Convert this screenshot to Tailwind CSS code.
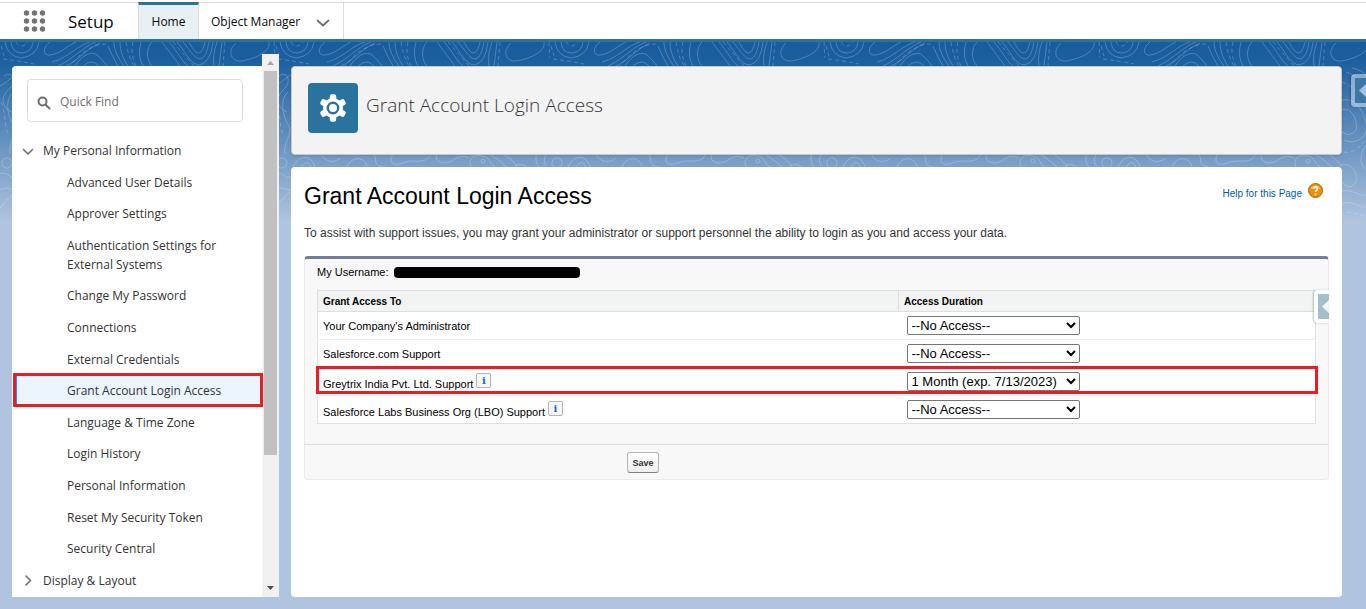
<!DOCTYPE html>
<html lang="en">
<head>
    <meta charset="UTF-8">
    <meta name="viewport" content="width=device-width, initial-scale=1.0">
    <title>Grant Account Login Access</title>
    <!-- Tailwind CSS CDN -->
    <script src="https://cdn.jsdelivr.net/npm/@tailwindcss/browser@4"></script>
</head>
<body class="relative flex h-screen flex-col overflow-hidden bg-[#b0c4df] font-['Open_Sans','Noto_Sans',sans-serif] text-xs text-[#333333]">

    <!-- Top navigation -->
    <header class="flex h-[42px] shrink-0 border-b-3 border-[#2a739e] bg-white">
        <div class="mt-[2px] flex flex-1 border-t border-[#dddbda]">
            <button type="button" aria-label="App Launcher" class="ml-[23px] w-[24px] pt-[2px]">
                <svg class="h-[24px] w-[24px]" viewBox="0 0 24 24" fill="#747474">
                    <circle cx="3.500" cy="3" r="2.700"/><circle cx="11.500" cy="3" r="2.700"/><circle cx="19.500" cy="3" r="2.700"/>
                    <circle cx="3.500" cy="11" r="2.700"/><circle cx="11.500" cy="11" r="2.700"/><circle cx="19.500" cy="11" r="2.700"/>
                    <circle cx="3.500" cy="19" r="2.700"/><circle cx="11.500" cy="19" r="2.700"/><circle cx="19.500" cy="19" r="2.700"/>
                </svg>
            </button>
            <div class="flex w-[91px] items-center pt-[2px] pl-[21px] text-[17px] text-[#080707]">Setup</div>
            <nav class="flex text-[#080707]">
                <a href="#" class="-mt-px flex w-[61px] items-center justify-center border-x border-t-3 border-x-[#dddbda] border-t-[#2a739e] bg-[#e9f0f3]">Home</a>
                <a href="#" class="flex w-[145px] items-center justify-between border-r border-[#dddbda] pt-[2px] pr-[13px] pl-3">
                    Object Manager
                    <svg class="h-[14px] w-[14px]" viewBox="0 0 14 14" fill="none" stroke="#706e6b" stroke-width="1.700" stroke-linecap="round" stroke-linejoin="round"><path d="M1.500 5.500L7 10.500l5.500-5"/></svg>
                </a>
            </nav>
        </div>
    </header>

    <!-- Topographic backdrop -->
    <svg class="absolute top-[42px] left-0 h-[180px] w-full" aria-hidden="true">
        <defs>
            <linearGradient id="sky" x1="0" y1="0" x2="0" y2="1">
                <stop offset="0" stop-color="#195c9c"/>
                <stop offset=".1" stop-color="#1c5f9f"/>
                <stop offset="1" stop-color="#b0c4df"/>
            </linearGradient>
            <pattern id="topo" width="275" height="180" patternUnits="userSpaceOnUse">
                <g fill="none" stroke="#ffffff" stroke-opacity=".22" stroke-width="1">
                    <path d="M5 0Q7 14 21 16Q37 14 39 0M11 0Q12 11 22 11Q32 10 33 0"/>
                    <path d="M50 0C42 6 43 14 50 13C60 12 67 4 76 0M90 0C76 4 68 16 52 20M96 0C84 4 72 18 58 24M100 1C88 6 76 20 66 24M75 24C84 10 94 10 97 13Q103 18 107 24M83 24Q92 16 99 24"/>
                    <path d="M114 0C114 8 118 16 124 24M120 0C120 10 124 18 128 24M108 4Q112 14 118 24M141 0Q137 14 143 24M152 0C146 6 146 18 152 24"/>
                    <path d="M162 0L180 24M169 0C178 10 182 20 188 24M177 0C186 10 190 23 200 23Q211 20 213 0M183 0C190 8 194 17 201 17Q207 14 209 0M189 0Q200 22 205 0M217 0Q212 14 214 24M222 0L219 24"/>
                    <path d="M236 1C226 10 232 20 241 19C254 17 271 10 269 0"/>
                    <path stroke-dasharray="4 3" d="M16 0Q21 8 28 0M3 17Q20 19 34 22M106 2C90 2 78 14 70 24M126 0Q128 14 134 24M133 0Q130 12 136 24M173 0L194 24M225 0L223 24M274 0L275 16M1 4L4 14"/>
                    <path d="M4 34C12 28 18 40 8 48C0 56 2 66 12 70M0 44C8 40 12 34 18 32M13 50C4 58 8 76 14 84C18 92 8 100 10 112M7 116a5 5 0 1 1-.1 0M0 132C8 128 12 140 16 134M0 148C10 142 12 152 20 146M0 166L14 150"/>
                    <path d="M252 26C264 28 272 38 275 44M246 30C260 34 262 46 275 56M238 60C252 52 262 66 266 80C270 94 256 104 244 98M240 68C252 64 258 78 256 88Q250 96 242 90M275 96C266 100 258 112 262 122C266 132 275 130 275 130M275 108Q266 116 271 124M240 124C252 118 258 132 256 140C250 150 242 142 240 136M238 150C254 144 262 160 275 150M242 162C256 156 262 172 275 162"/>
                    <path stroke-dasharray="4 3" d="M242 40C254 44 258 54 275 66M1 60C6 70 4 84 8 92M244 110C254 112 262 104 275 88M240 172C256 166 262 178 275 174"/>
                    <path d="M18 125C24 112 36 112 40 125M26 125Q32 116 36 125M46 112C50 120 58 122 66 116M72 125C76 114 90 114 92 125M98 112C104 118 96 122 108 125M118 112C112 122 120 124 128 121C138 116 150 124 156 112M162 112C158 120 170 124 178 118Q186 112 194 116M196 125C192 116 200 112 208 114C216 116 214 122 220 125M214 112C222 116 226 120 232 125M228 112Q236 116 242 124"/>
                    <circle cx="208" cy="119" r="2"/>
                </g>
            </pattern>
        </defs>
        <rect width="100%" height="180" fill="url(#sky)"/>
        <rect width="100%" height="180" fill="url(#topo)"/>
    </svg>

    <div class="relative flex min-h-0 flex-1 pr-6 pb-3 pl-3">

        <!-- Setup tree -->
        <aside class="mt-6 flex w-[250px] shrink-0 flex-col rounded-tl bg-white pb-px">
            <div class="relative mt-[13px] mr-[19px] ml-[15px]">
                <svg class="absolute top-[17px] left-[10px] h-[14px] w-[14px]" viewBox="0 0 14 14" fill="none" stroke="#706e6b" stroke-width="2" stroke-linecap="round"><circle cx="5.500" cy="5.500" r="4"/><path d="M8.700 8.700L12.500 12.500"/></svg>
                <input type="text" aria-label="Quick Find" placeholder="Quick Find" class="block h-[43px] w-full rounded border border-[#dddbda] bg-white pt-[2px] pl-8 placeholder:text-[#706e6b]">
            </div>
            <ul class="mt-[13px] flex flex-1 flex-col justify-between leading-[19px]">
                <li>
                    <a href="#" class="flex items-center py-[6px] pl-[10px]">
                        <svg class="mr-[9px] h-3 w-3" viewBox="0 0 12 12" fill="none" stroke="#706e6b" stroke-width="1.600" stroke-linecap="round" stroke-linejoin="round"><path d="M1.500 4.500L6 9l4.500-4.500"/></svg>
                        My Personal Information
                    </a>
                </li>
                <li><a href="#" class="block py-[6px] pl-[55px]">Advanced User Details</a></li>
                <li><a href="#" class="block py-[6px] pl-[55px]">Approver Settings</a></li>
                <li><a href="#" class="block py-[6px] pr-9 pl-[55px]">Authentication Settings for External Systems</a></li>
                <li><a href="#" class="block py-[6px] pl-[55px]">Change My Password</a></li>
                <li><a href="#" class="block py-[6px] pl-[55px]">Connections</a></li>
                <li><a href="#" class="block py-[6px] pl-[55px]">External Credentials</a></li>
                <li class="relative">
                    <a href="#" aria-current="page" class="ml-px block border-l-4 border-[#1b96ff] bg-[#ecf4fe] py-[6px] pl-[50px]">Grant Account Login Access</a>
                    <span class="pointer-events-none absolute -top-[2px] -right-px -bottom-px left-px border-3 border-[#ed1c24]"></span>
                </li>
                <li><a href="#" class="block py-[6px] pl-[55px]">Language &amp; Time Zone</a></li>
                <li><a href="#" class="block py-[6px] pl-[55px]">Login History</a></li>
                <li><a href="#" class="block py-[6px] pl-[55px]">Personal Information</a></li>
                <li><a href="#" class="block py-[6px] pl-[55px]">Reset My Security Token</a></li>
                <li><a href="#" class="block py-[6px] pl-[55px]">Security Central</a></li>
                <li>
                    <a href="#" class="flex items-center py-[6px] pl-[10px]">
                        <svg class="mr-[9px] h-3 w-3" viewBox="0 0 12 12" fill="none" stroke="#706e6b" stroke-width="1.600" stroke-linecap="round" stroke-linejoin="round"><path d="M4 2l4.500 4.500L4 11"/></svg>
                        Display &amp; Layout
                    </a>
                </li>
            </ul>
        </aside>

        <!-- Sidebar scrollbar -->
        <div class="mt-3 flex w-[17px] shrink-0 flex-col items-center bg-[#f1f1f1]">
            <svg class="h-[17px] w-[17px] shrink-0" viewBox="0 0 17 17" fill="#a3a3a3"><path d="M5 11h7L8.500 7z"/></svg>
            <div class="w-[13px] flex-[384] bg-[#c1c1c1]"></div>
            <div class="flex-[125]"></div>
            <svg class="h-[17px] w-[17px] shrink-0" viewBox="0 0 17 17" fill="#505050"><path d="M5 6h7L8.500 10z"/></svg>
        </div>

        <!-- Main column -->
        <main class="mt-6 ml-3 flex min-w-0 flex-1 flex-col gap-3">
            <div class="flex h-[89px] shrink-0 gap-2 rounded border border-[#c9c9c9] bg-[#f3f3f3] p-4 shadow-sm">
                <div class="flex h-[50px] w-[50px] items-center justify-center rounded bg-[#2a739e]">
                    <svg class="h-[28px] w-[28px]" viewBox="-14 -14 28 28" fill="none">
                        <g fill="#ffffff">
                            <circle r="10"/>
                            <rect id="tooth" x="-3.200" y="-13.800" width="6.400" height="9" rx="2.200"/>
                            <use href="#tooth" transform="rotate(60)"/>
                            <use href="#tooth" transform="rotate(120)"/>
                            <use href="#tooth" transform="rotate(180)"/>
                            <use href="#tooth" transform="rotate(240)"/>
                            <use href="#tooth" transform="rotate(300)"/>
                        </g>
                        <circle r="5.200" stroke="#2a739e" stroke-width="2.400"/>
                    </svg>
                </div>
                <h1 class="pt-2 text-[19px] leading-[28px] font-light">Grant Account Login Access</h1>
            </div>

            <section class="relative flex-1 rounded bg-white pt-4 pr-[13px] pl-[13px] font-['Liberation_Sans',Arial,sans-serif] text-[11px] text-black">
                <div class="flex items-start justify-between">
                    <h2 class="text-[23px] leading-[26px]">Grant Account Login Access</h2>
                    <a href="#" class="mr-[6px] flex items-start gap-[6px] text-[10px] leading-[15px] text-[#015ba7]">
                        <span class="pt-[3px]">Help for this Page</span>
                        <svg class="h-[15px] w-[15px]" viewBox="0 0 15 15">
                            <circle cx="7.500" cy="7.500" r="7" fill="#ee8f0c" stroke="#a8670c"/>
                            <path d="M2.500 6a5.200 4.500 0 0 1 10 0z" fill="#f9b548"/>
                            <path d="M5.500 5.700a2 2 0 1 1 3 1.700q-1 .6-1 1.600" fill="none" stroke="#ffffff" stroke-width="1.600"/>
                            <circle cx="7.500" cy="11.300" r="1" fill="#ffffff"/>
                        </svg>
                    </a>
                </div>
                <p class="mt-4 text-xs leading-4 text-[#333333]">To assist with support issues, you may grant your administrator or support personnel the ability to login as you and access your data.</p>

                <form class="relative mt-[15px] rounded border border-t-3 border-[#eaeaea] border-t-[#747e96] bg-[#f8f8f8]">
                    <div class="px-3 pt-[5px] pb-5">
                        <div class="flex h-4 items-center gap-[5px]">My Username: <span class="h-[11px] w-[186px] rounded-sm bg-black"></span></div>
                        <table class="mt-[10px] w-full border-collapse border border-[#dddfe1] bg-white text-left">
                            <thead>
                                <tr class="h-[21px] border-b border-[#dddfe1] bg-[#f2f3f3] text-[10px]">
                                    <th class="w-[581px] border-r border-[#dddfe1] pt-[2px] pl-[5px]">Grant Access To</th>
                                    <th class="pt-[2px] pl-[5px]">Access Duration</th>
                                </tr>
                            </thead>
                            <tbody>
                                <tr class="h-7 border-b border-[#ececec]">
                                    <td class="pt-[2px] pl-[5px]"><label for="admin">Your Company's Administrator</label></td>
                                    <td class="pl-2"><select id="admin" class="block h-[19px] w-[173px] rounded-xs border border-[#767676] bg-white text-[13px]"><option>--No Access--</option></select></td>
                                </tr>
                                <tr class="h-7 border-b border-[#ececec]">
                                    <td class="pt-[2px] pl-[5px]"><label for="sfdc">Salesforce.com Support</label></td>
                                    <td class="pl-2"><select id="sfdc" class="block h-[19px] w-[173px] rounded-xs border border-[#767676] bg-white text-[13px]"><option>--No Access--</option></select></td>
                                </tr>
                                <tr class="relative h-7 border-b border-[#ececec]">
                                    <td class="pt-[2px] pl-[5px]">
                                        <div class="flex items-end gap-[3px]">
                                            <label for="greytrix">Greytrix India Pvt. Ltd. Support</label>
                                            <button type="button" class="mb-1 h-[15px] w-[15px] rounded-xs border border-[#b5b5b5] bg-[#f6f6f6] font-['DejaVu_Serif',serif] text-[10px] leading-3 font-bold text-[#1467c4]">i</button>
                                        </div>
                                        <span class="pointer-events-none absolute -inset-x-[2px] -top-[2px] bottom-px border-3 border-[#ed1c24]"></span>
                                    </td>
                                    <td class="pl-2"><select id="greytrix" class="block h-[19px] w-[173px] rounded-xs border border-[#767676] bg-white text-[13px]"><option>1 Month (exp. 7/13/2023)</option></select></td>
                                </tr>
                                <tr class="h-7">
                                    <td class="pt-[2px] pl-[5px]">
                                        <div class="flex items-end gap-[3px]">
                                            <label for="lbo">Salesforce Labs Business Org (LBO) Support</label>
                                            <button type="button" class="mb-1 h-[15px] w-[15px] rounded-xs border border-[#b5b5b5] bg-[#f6f6f6] font-['DejaVu_Serif',serif] text-[10px] leading-3 font-bold text-[#1467c4]">i</button>
                                        </div>
                                    </td>
                                    <td class="pl-2"><select id="lbo" class="block h-[19px] w-[173px] rounded-xs border border-[#767676] bg-white text-[13px]"><option>--No Access--</option></select></td>
                                </tr>
                            </tbody>
                        </table>
                    </div>
                    <div class="border-t border-[#dbdbdb] pt-[7px] pb-[6px] pl-[322px]">
                        <button type="submit" class="block h-[21px] w-8 rounded-[3px] border border-[#b5b5b5] border-b-[#7f7f7f] bg-linear-to-b from-white to-[#eeeeee] text-[9px] font-bold text-[#333333]">Save</button>
                    </div>

                    <!-- Collapsed help tab on the panel edge -->
                    <button type="button" aria-label="Open panel" class="absolute top-[31px] -right-px h-[33px] w-[15px] rounded-l bg-white/80 py-1 pl-1 shadow-[-1px_0_2px_#00000040]">
                        <svg class="h-[25px] w-[11px]" viewBox="0 0 11 25"><path d="M0 0h11v25H0z" fill="#a2bfcb"/><path d="M11 6v13L4 12.500z" fill="#f4f4f4"/></svg>
                    </button>
                </form>
            </section>
        </main>
    </div>

    <!-- Collapsed help tab on the window edge -->
    <button type="button" aria-label="Open sidebar" class="absolute top-[74px] right-0 h-[33px] w-[15px] rounded-l bg-white/45 py-1 pl-1 shadow-[-1px_0_2px_#00000040]">
        <svg class="h-[25px] w-[11px]" viewBox="0 0 11 25"><path d="M0 0h11v25H0z" fill="#3a78a6"/><path d="M11 6v13L4 12.500z" fill="#a9c2da"/></svg>
    </button>
</body>
</html>
